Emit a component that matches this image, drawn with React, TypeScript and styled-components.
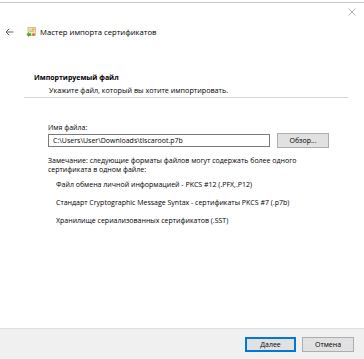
import React from 'react'
import styled, { createGlobalStyle } from 'styled-components'

const Global = createGlobalStyle`
  html, body { margin: 0; padding: 0; background: #fff; }
  body { font-family: "Open Sans", "Noto Sans", sans-serif; color: #000; }
`

const Window = styled.div`
  width: 364px;
  height: 359px;
  box-sizing: border-box;
  padding-top: 2px;
  display: flex;
  flex-direction: column;
  overflow: hidden;
`

const Frame = styled.div`
  flex: 1;
  border-top: 1px solid #c8c8c8;
  display: flex;
  flex-direction: column;
`

const TitleBar = styled.div`
  height: 18px;
  display: flex;
  justify-content: flex-end;
  align-items: center;
  padding-right: 8px;
`

const NavRow = styled.div`
  display: flex;
  align-items: center;
  height: 22px;
  padding-left: 5px;
`

const BackButton = styled.span`
  width: 10px;
  display: flex;
  margin-right: 11px;
`

const Title = styled.span`
  font-size: 7.7px;
  margin-left: 4px;
`

const Header = styled.div`
  padding: 30px 0 0 34px;
  height: 44px;
  box-sizing: border-box;
`

const Heading = styled.div`
  font-size: 7px;
  font-weight: 700;
`

const Subheading = styled.div`
  font-size: 7.2px;
  margin: 3px 0 0 15px;
`

const Separator = styled.hr`
  margin: 10px 16px 0 24px;
  border: 0;
  border-top: 1px solid #d4d4d4;
`

const Body = styled.div`
  flex: 1;
  padding: 25px 0 0 48px;
  font-size: 7px;
`

const Label = styled.div`
  margin-bottom: 1px;
`

const FileRow = styled.div`
  display: flex;
  align-items: center;
  gap: 7px;
`

const PathBox = styled.div`
  width: 222px;
  height: 13px;
  box-sizing: border-box;
  border: 1px solid #7a7a7a;
  padding: 0 4px;
  display: flex;
  align-items: center;
  font-size: 7px;
`

const Button = styled.button<{ $default?: boolean }>`
  font-family: inherit;
  font-size: 7px;
  color: #000;
  width: ${p => p.$default ? 51 : 52}px;
  height: 15px;
  padding: 0;
  background: #e1e1e1;
  border: 1px solid ${p => p.$default ? '#0078d7' : '#adadad'};
  box-shadow: ${p => p.$default ? 'inset 0 0 0 1px #0078d7' : 'none'};
`

const Note = styled.p`
  margin: 8px 0 0;
  line-height: 9px;
`

const FormatList = styled.ul`
  list-style: none;
  margin: 6px 0 0;
  padding: 0 0 0 8px;
  display: flex;
  flex-direction: column;
  gap: 9px;
`

const Footer = styled.div`
  height: 30px;
  background: #f0f0f0;
  border-top: 1px solid #dfdfdf;
  display: flex;
  justify-content: flex-end;
  align-items: center;
  gap: 6px;
  padding-right: 10px;
`

const CloseIcon = () => (
  <svg width="8" height="8" viewBox="0 0 8 8">
    <path d="M0.5 0.5L7.5 7.5M7.5 0.5L0.5 7.5" stroke="#9a9a9a" strokeWidth="0.8" />
  </svg>
)

const BackIcon = () => (
  <svg width="9" height="8" viewBox="0 0 9 8">
    <path d="M8.5 4H1M4.2 0.8L1 4L4.2 7.2" stroke="#555" strokeWidth="0.9" fill="none" />
  </svg>
)

const CertIcon = () => (
  <svg width="10" height="10" viewBox="0 0 10 10">
    <rect x="2" y="0.5" width="7.5" height="8" fill="#f3e6b8" stroke="#b5a06a" strokeWidth="0.6" />
    <rect x="6" y="1.5" width="2.5" height="2" fill="#e2b040" />
    <path d="M3.5 3H6M3.5 4.5H8" stroke="#aa9a70" strokeWidth="0.5" />
    <path d="M0.5 7.5L3 5L3 6.3L5 6.3L5 8.7L3 8.7L3 10Z" fill="#3fae2a" />
    <circle cx="7.5" cy="7.5" r="1.3" fill="#e35c2b" />
  </svg>
)

export default function App() {
  return (
    <>
      <Global />
      <Window>
        <Frame>
          <TitleBar>
            <CloseIcon />
          </TitleBar>
          <NavRow>
            <BackButton><BackIcon /></BackButton>
            <CertIcon />
            <Title>Мастер импорта сертификатов</Title>
          </NavRow>
          <Header>
            <Heading>Импортируемый файл</Heading>
            <Subheading>Укажите файл, который вы хотите импортировать.</Subheading>
          </Header>
          <Separator />
          <Body>
            <Label>Имя файла:</Label>
            <FileRow>
              <PathBox>C:\Users\User\Downloads\tlscaroot.p7b</PathBox>
              <Button>Обзор...</Button>
            </FileRow>
            <Note>
              Замечание: следующие форматы файлов могут содержать более одного
              <br />
              сертификата в одном файле:
            </Note>
            <FormatList>
              <li>Файл обмена личной информацией - PKCS #12 (.PFX,.P12)</li>
              <li>Стандарт Cryptographic Message Syntax - сертификаты PKCS #7 (.p7b)</li>
              <li>Хранилище сериализованных сертификатов (.SST)</li>
            </FormatList>
          </Body>
          <Footer>
            <Button $default>Далее</Button>
            <Button>Отмена</Button>
          </Footer>
        </Frame>
      </Window>
    </>
  )
}
